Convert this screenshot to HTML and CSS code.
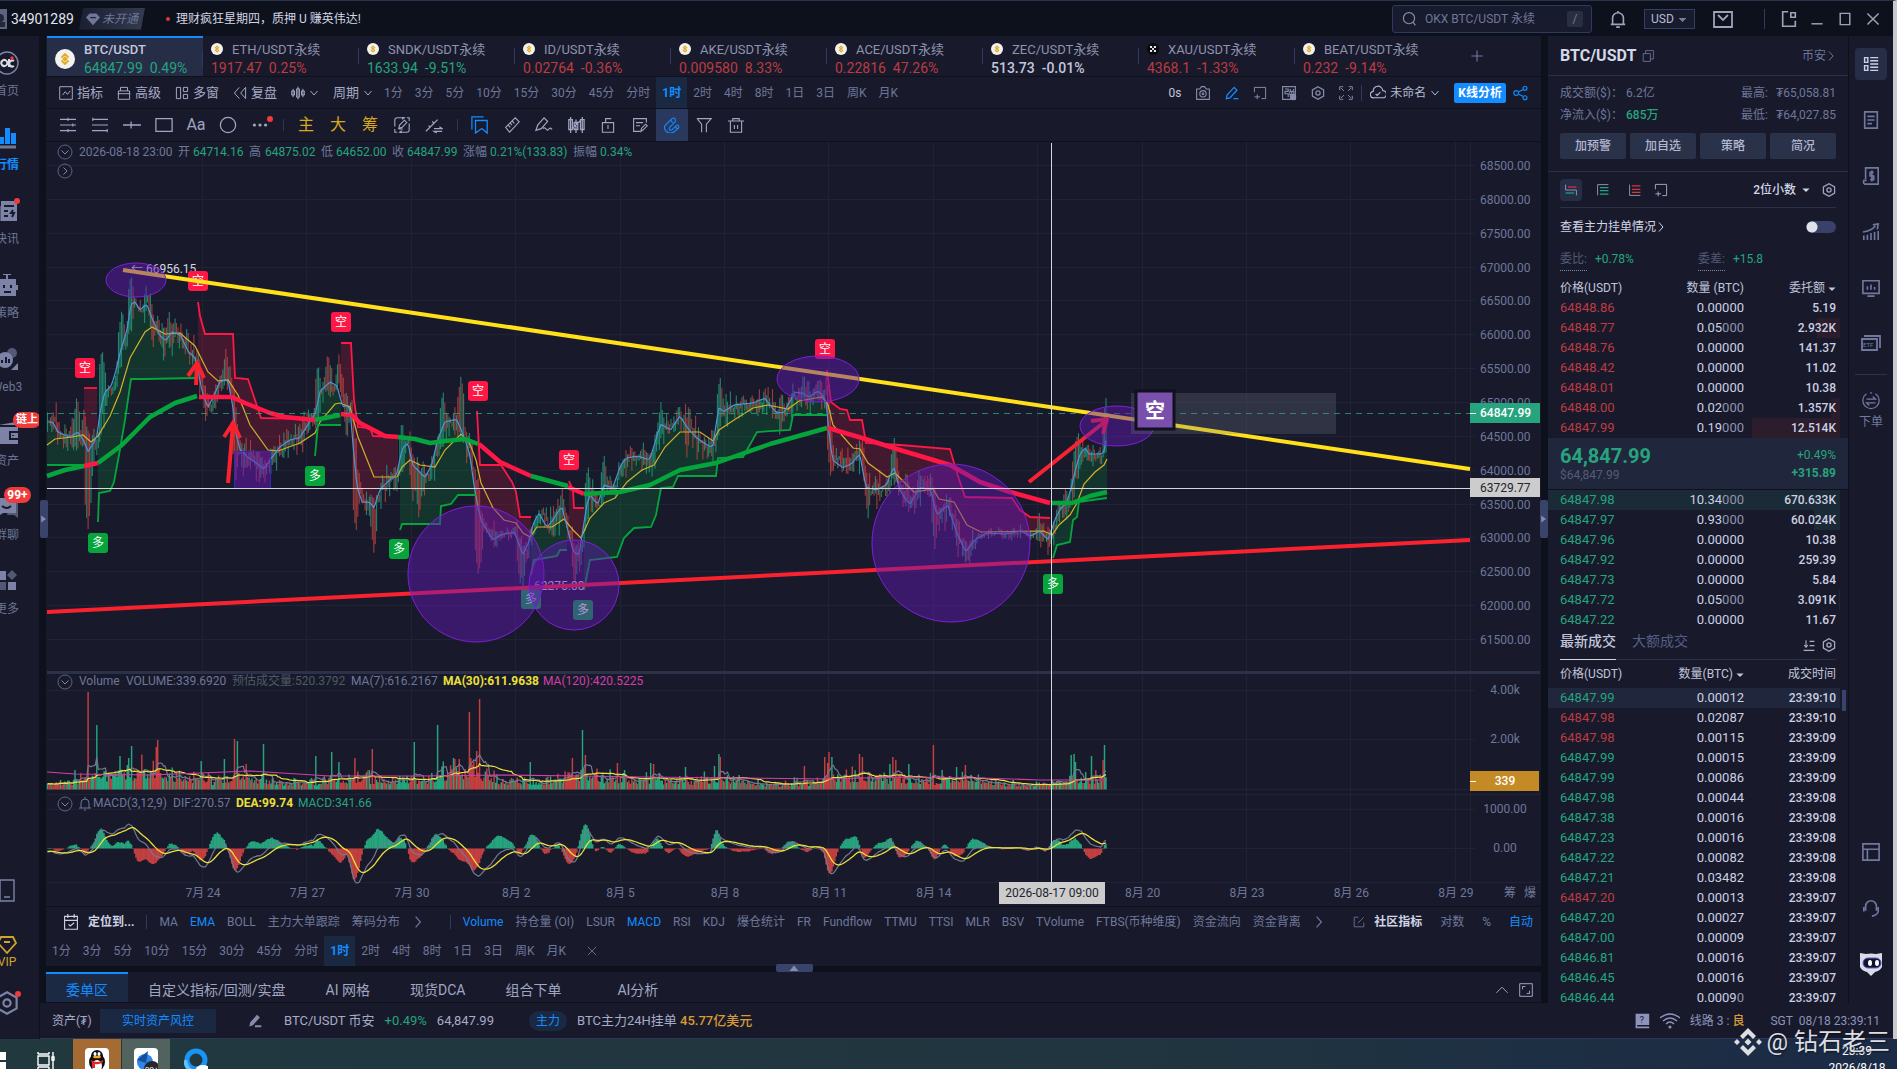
FILE: index.html
```html
<!DOCTYPE html>
<html lang="zh-CN">
<head>
<meta charset="utf-8">
<meta name="viewport" content="width=device-width, initial-scale=1">
<title>BTC/USDT</title>
<link rel="stylesheet" href="styles.css">
</head>
<body>
<svg class="defs" aria-hidden="true">
  <symbol id="hex" viewBox="0 0 20 20"><path d="M10 1l8 4.500v9L10 19l-8-4.500v-9z"/><circle cx="10" cy="10" r="3"/></symbol>
  <symbol id="bell" viewBox="0 0 20 20"><path d="M2 16h16M4 16V9a6 6 0 0112 0v7M8 19h4M10 1v2"/></symbol>
  <symbol id="down" viewBox="0 0 20 20"><path d="M3 6l7 8 7-8" stroke-width="2"/></symbol>
  <symbol id="right" viewBox="0 0 20 20"><path d="M6 1l8 9-8 9" stroke-width="2"/></symbol>
  <symbol id="caret" viewBox="0 0 20 20"><path class="solid" d="M1 6h18l-9 9z"/></symbol>
  <symbol id="pencil" viewBox="0 0 20 20"><path d="M2 18l1-5L13 2l4 4L7 17zM12 18h7"/></symbol>
  <symbol id="addbox" viewBox="0 0 20 20"><path d="M2 9V2h16v16h-6M6 12v7M2 15.500h8"/></symbol>
  <symbol id="coin" viewBox="0 0 20 20"><circle cx="10" cy="10" r="10" fill="#f2f2f0" stroke="none"/><path d="M6.500 8.500L10 5l3.500 3.500M6.500 11.500L10 15l3.500-3.500M10 8.500l1.500 1.500-1.500 1.500L8.500 10zM5 10h.1M15 10h.1" stroke="#e5ab1c" stroke-width="1.800" fill="none"/></symbol>
  <symbol id="okx" viewBox="0 0 20 20"><circle cx="10" cy="10" r="10" fill="#08090d" stroke="none"/><path d="M5 5h3.500v3.500H5zM11.500 5H15v3.500h-3.500zM8.500 8.500h3v3h-3zM5 11.500h3.500V15H5zM11.500 11.500H15V15h-3.500z" fill="#e6e6ea" stroke="none"/></symbol>
  <symbol id="binance" viewBox="0 0 28 28"><path class="solid" d="M14 0l8 8-3 3-5-5-5 5-3-3zM14 28l8-8-3-3-5 5-5-5-3 3zM14 10.500l3.500 3.500-3.500 3.500-3.500-3.500zM3 11l3 3-3 3-3-3zM25 11l3 3-3 3-3-3z"/></symbol>
</svg>

<div class="window">
  <header class="topbar">
    <span class="avatar"><svg class="ic"><circle class="solid" cx="0" cy="9" r="4"/><path class="solid" d="M0 13h5v5H0z"/></svg></span>
    <strong class="uid">34901289</strong>
    <span class="vip-tag"><svg class="ic s14" viewBox="0 0 20 20"><path class="solid" d="M5 2h10l5 6-10 11L0 8z"/><path d="M6 8h8" stroke="#1c2032" stroke-width="2"/></svg>未开通</span>
    <a class="notice" href="#">理财疯狂星期四，质押 U 赚英伟达!</a>
    <div class="top-tools">
      <label class="search"><svg class="ic s16" viewBox="0 0 20 20"><circle cx="10" cy="9" r="7"/><path d="M15 14l3 4"/></svg><input type="text" aria-label="搜索" placeholder="OKX BTC/USDT 永续"><kbd>/</kbd></label>
      <button class="tb" aria-label="提醒"><svg class="ic s18 thick"><use href="#bell"/></svg></button>
      <select class="currency" aria-label="计价货币"><option>USD</option></select>
      <button class="tb mail" aria-label="消息"><svg class="ic s20 thick" viewBox="0 0 20 20"><path d="M1 3h18v15H1zM5 6l5 5 5-5"/></svg></button>
      <i class="vsep"></i>
      <button class="tb" aria-label="弹出"><svg class="ic s18 thick" viewBox="0 0 20 20"><path d="M9 2H3v16h14v-6M12 3h5v5h-5z"/></svg></button>
      <button class="tb" aria-label="最小化"><svg class="ic s16 thick" viewBox="0 0 20 20"><path d="M3 16h14"/></svg></button>
      <button class="tb" aria-label="最大化"><svg class="ic s16 thick" viewBox="0 0 20 20"><path d="M4 3h12v14H4z"/></svg></button>
      <button class="tb" aria-label="关闭"><svg class="ic s16 thick" viewBox="0 0 20 20"><path d="M3 3l14 14M17 3L3 17"/></svg></button>
    </div>
  </header>

  <div class="body">
    <nav class="side">
      <ul>
        <li><a href="#"><svg class="ic s24" viewBox="0 0 24 24"><circle cx="12" cy="12" r="11"/><path class="bright" d="M11 9.500a3 3 0 100 5 3 3 0 000-5zM14 8v7h2M19 10a3 3 0 100 5"/><circle cx="17" cy="7" r="1" fill="#f33" stroke="#f33"/></svg>首页</a></li>
        <li class="on"><a href="#"><svg class="ic s24" viewBox="0 0 24 24"><path class="solid" d="M4 12h5v7H4zM10 3h5v16h-5zM16 8h5v11h-5z"/><path d="M3 22h18" stroke="#6f7799" stroke-width="3"/></svg>行情</a></li>
        <li><a href="#"><svg class="ic s24" viewBox="0 0 24 24"><path class="solid" d="M2 7h4v15H2z" opacity=".6"/><path class="solid" d="M6 2h16v20H6z"/><path class="cut" d="M9 7h10M9 12h4M9 17h4M18 11l-2 3h3l-2 4"/></svg>快讯<i class="dot"></i></a></li>
        <li><a href="#"><svg class="ic s24" viewBox="0 0 24 24"><path class="solid" d="M4 6h17v17H4zM1 12h22v5H1zM11 1h2v5h-2zM8 1h8v1H8z"/><path class="cut" d="M9 12v3M16 12v3M9 19h7"/></svg>策略</a></li>
        <li><a href="#"><svg class="ic s24" viewBox="0 0 24 24"><circle class="solid" cx="17" cy="6" r="5" opacity=".6"/><circle class="solid" cx="10" cy="13" r="8"/><path class="solid" d="M23 16v7h-7z"/><path class="cut" d="M7 13v3M11 10v6M14 12v4"/></svg>Web3</a></li>
        <li><a href="#"><svg class="ic s24" viewBox="0 0 24 24"><path class="solid" d="M2 6h21v17H2zM3 4l18-3v3z"/><path class="cut" d="M23 11h-8v7h8M18 14v1"/></svg>资产<b class="badge new">链上</b></a></li>
        <li><a href="#"><svg class="ic s24" viewBox="0 0 24 24"><path class="solid" d="M16 8h7v15l-4-3h-7z" opacity=".6"/><path class="solid" d="M2 3h19v15H8l-6 4z"/><path class="cut" d="M7 11q5 4 9 0"/></svg>群聊<b class="badge count">99+</b></a></li>
        <li><a href="#"><svg class="ic s24" viewBox="0 0 24 24"><path class="solid" d="M2 2h9v9H2zM13 13h8v8h-8z"/><path class="solid" d="M17 1l5 5-5 5-5-5zM2 13h9v8H2z" opacity=".6"/></svg>更多</a></li>
      </ul>
      <ul class="side-foot">
        <li><a href="#" aria-label="手机"><svg class="ic s24" viewBox="0 0 24 24"><path d="M5 1h14v21H5zM9 18h6"/></svg></a></li>
        <li class="gold"><a href="#"><svg class="ic s20 thick" viewBox="0 0 20 20"><path d="M4 2h12l3 6-9 10L1 8zM7 7h6"/></svg>VIP</a></li>
        <li><a href="#" aria-label="设置"><svg class="ic s24 thick"><use href="#hex"/></svg><i class="dot"></i></a></li>
      </ul>
    </nav>

    <div class="stage">
      <div class="work">
        <main class="market">
          <nav class="tabs" id="tabs"><button class="plus" aria-label="添加"><svg class="ic s16" viewBox="0 0 20 20"><path d="M10 3v14M3 10h14"/></svg></button></nav>

          <div class="tools">
            <button><svg class="ic s14" viewBox="0 0 20 20"><path d="M1 1h18v18H1zM5 13l4-5 3 4 4-5"/></svg>指标</button>
            <button><svg class="ic s14" viewBox="0 0 20 20"><path d="M2 7h16v12H2zM5 7V2h10v5M1 11h18"/></svg>高级</button>
            <button><svg class="ic s14" viewBox="0 0 20 20"><path d="M2 2h6v16H2zM12 2h6v6h-6zM12 12h6v6h-6z"/></svg>多窗</button>
            <button><svg class="ic s14" viewBox="0 0 20 20"><path d="M9 2L2 10l7 8M18 2v16l-7-8z"/></svg>复盘</button>
            <button aria-label="K线样式"><svg class="ic s14" viewBox="0 0 20 20"><path d="M1 7h4v6H1zM8 4h4v12H8zM15 7h4v6h-4zM3 4v12M10 1v18M17 4v12"/></svg><svg class="ic s10"><use href="#down"/></svg></button>
            <button>周期<svg class="ic s10"><use href="#down"/></svg></button>
            <div class="periods"></div>
            <div class="tools-right">
              <span class="light">0s</span>
              <button aria-label="截图"><svg class="ic s16" viewBox="0 0 20 20"><path d="M2 5h4l2-3h4l2 3h4v13H2z"/><circle cx="10" cy="11" r="4"/><circle cx="10" cy="11" r="1"/></svg></button>
              <button class="blue" aria-label="画线"><svg class="ic s14 thick"><use href="#pencil"/></svg></button>
              <button aria-label="添加窗口"><svg class="ic s14"><use href="#addbox"/></svg></button>
              <button aria-label="弹幕"><svg class="ic s16" viewBox="0 0 20 20"><path d="M2 2h16v16H2zM5 5h4v3H5v3h4v4M11 5l1 2M16 5l-1 2M11 8h5v4h-5zM13.500 8v8"/><circle class="solid" cx="15" cy="15" r="4"/></svg></button>
              <button aria-label="设置"><svg class="ic s14 thick"><use href="#hex"/></svg></button>
              <button aria-label="全屏"><svg class="ic s14" viewBox="0 0 20 20"><path d="M1 6V1h5M14 1h5v5M19 14v5h-5M6 19H1v-5M3 3l4 4M17 3l-4 4M17 17l-4-4M3 17l4-4"/></svg></button>
              <i class="vsep"></i>
              <button class="name"><svg class="ic s16" viewBox="0 0 20 20"><path d="M5 16a4 4 0 01-1-8 6 6 0 0112-1 4.500 4.500 0 010 9zM7 11l2 2 4-4"/></svg>未命名<svg class="ic s10"><use href="#down"/></svg></button>
              <button class="analyse">K线分析</button>
              <button class="blue share" aria-label="分享"><svg class="ic s16" viewBox="0 0 20 20"><circle cx="4" cy="10" r="3"/><circle cx="15" cy="4" r="2.500"/><circle cx="15" cy="16" r="2.500"/><path d="M7 8.500l6-3M7 11.500l6 3"/></svg></button>
            </div>
          </div>

          <div class="draw">
            <button aria-label="平行线"><svg class="ic s16" viewBox="0 0 20 20"><path d="M0 3h20M0 10h20M0 17h20M10 1v4M16 8v4M10 15v4"/></svg></button>
            <button aria-label="斐波那契"><svg class="ic s16" viewBox="0 0 20 20"><path d="M1 3h19M0 10h20M0 17h19M1 1v4M19 15v4"/></svg></button>
            <button aria-label="水平线"><svg class="ic s18" viewBox="0 0 20 20"><path d="M0 10h20M9 6v8"/></svg></button>
            <button aria-label="矩形"><svg class="ic s18" viewBox="0 0 20 20"><path d="M1 3h18v14H1z"/></svg></button>
            <button class="aa">Aa</button>
            <button aria-label="圆"><svg class="ic s18" viewBox="0 0 20 20"><circle cx="10" cy="10" r="8.500"/></svg></button>
            <button class="more" aria-label="更多"><svg class="ic s16" viewBox="0 0 20 20"><circle class="solid" cx="3" cy="10" r="2"/><circle class="solid" cx="10" cy="10" r="2"/><circle class="solid" cx="17" cy="10" r="2"/></svg><i class="dot"></i></button>
            <i class="dsep"></i>
            <button class="gold">主</button>
            <button class="gold">大</button>
            <button class="gold">筹</button>
            <button aria-label="连续画线"><svg class="ic s16" viewBox="0 0 20 20"><path d="M1 12V4q0-3 3-3h9M10 0l3 1-3 2M19 8v8q0 3-3 3H7M10 17l-3 2 3 1M1 15v4h3M19 5V1h-3M6 14l1-4 6-6 3 3-6 6zM6 15h5"/></svg></button>
            <button aria-label="趋势切换"><svg class="ic s18" viewBox="0 0 20 20"><path d="M1 17L14 4M6 12l-2-1M10 8L8 6M10 14h9l-3-2M19 17h-9l3 2"/></svg></button>
            <i class="dsep"></i>
            <button class="blue" aria-label="收藏"><svg class="ic s18" viewBox="0 0 20 20"><path d="M1 15V1h13M5 5h13v14l-6-5-7 5z"/></svg></button>
            <button aria-label="测量"><svg class="ic s16" viewBox="0 0 20 20"><path d="M2 13L14 1l5 5L7 19zM5 10l3 3M10 5l3 3M8 8l2 2"/></svg></button>
            <button aria-label="画笔"><svg class="ic s18" viewBox="0 0 20 20"><path d="M1 16l2-6 7-8 4 4-7 8zM9 14c3-3 4 4 6 1s3-1 4 0"/></svg></button>
            <button aria-label="K线形态"><svg class="ic s18" viewBox="0 0 20 20"><path d="M2 4h4v11H2zM8 7h4v8H8zM15 4h4v11h-4zM4 1v18M10 4v15M17 1v18M6 14l9-9"/></svg></button>
            <button aria-label="锁定"><svg class="ic s16" viewBox="0 0 20 20"><path d="M3 7h14v12H3zM7 7V2h7M10 10v5"/></svg></button>
            <button aria-label="笔记"><svg class="ic s16" viewBox="0 0 20 20"><path d="M18 7V2H2v16h8M5 7h9M5 11h5M11 18l1-4 5-5 2 2-5 5z"/></svg></button>
            <button class="magnet" aria-label="磁吸"><svg class="ic s16" viewBox="0 0 20 20"><path d="M2 10l8-8q3-2 4 1t-1 4l-6 6q-1 2 0 3t3 0l5-5q2-2 3 0t0 3l-6 5q-6 3-10-2-3-4 0-7zM8 4l3 3M14 12l3 3"/></svg></button>
            <button aria-label="筛选"><svg class="ic s16" viewBox="0 0 20 20"><path d="M1 2h18l-6 7v10M7 19V9L2 3"/></svg></button>
            <button aria-label="删除"><svg class="ic s16" viewBox="0 0 20 20"><path d="M0 5h20M6 5V2h8v3M3 5v14h14V5M8 10v5M12 10v5"/></svg></button>
          </div>

          <section class="chart"><svg id="chart" viewBox="46 142 1495 764" role="img" aria-label="BTC/USDT 1时 K线"></svg></section>

          <div class="indicators">
            <button class="goto"><svg class="ic s16" viewBox="0 0 20 20"><path d="M2 3h16v16H2zM2 8h16M6 0v5M14 0v5M7 13l2 2 5-4"/></svg>定位到...</button>
            <i class="vsep"></i>
            <button>MA</button><button class="blue">EMA</button><button>BOLL</button><button>主力大单跟踪</button><button>筹码分布</button>
            <button aria-label="更多主图指标"><svg class="ic s12"><use href="#right"/></svg></button>
            <i class="vsep wide"></i>
            <button class="blue">Volume</button><button>持仓量 (OI)</button><button>LSUR</button><button class="blue">MACD</button><button>RSI</button><button>KDJ</button><button>爆仓统计</button><button>FR</button><button>Fundflow</button><button>TTMU</button><button>TTSI</button><button>MLR</button><button>BSV</button><button>TVolume</button><button>FTBS(币种维度)</button><button>资金流向</button><button>资金背离</button>
            <button aria-label="更多副图指标"><svg class="ic s12"><use href="#right"/></svg></button>
            <div class="scale">
              <button class="goto community"><svg class="ic s12" viewBox="0 0 20 20"><path d="M9 2H2v16h16v-7M8 12L18 2"/></svg>社区指标</button>
              <button>对数</button><button>%</button><button class="blue">自动</button>
            </div>
          </div>
          <div class="period-row"><div class="periods"></div><button aria-label="关闭周期栏"><svg class="ic s12" viewBox="0 0 20 20"><path d="M3 3l14 14M17 3L3 17"/></svg></button></div>

          <nav class="orders">
            <button class="handle-top" aria-label="展开"><svg class="ic s10" viewBox="0 0 20 20"><path class="solid" d="M1 16h18L10 5z"/></svg></button>
            <button class="on">委单区</button><button>自定义指标/回测/实盘</button><button>AI 网格</button><button>现货DCA</button><button>组合下单</button><button class="ai">AI分析</button>
            <span class="orders-right"><svg class="ic s14" viewBox="0 0 20 20"><path d="M2 14l8-8 8 8"/></svg><svg class="ic s14" viewBox="0 0 20 20"><path d="M1 1h18v18H1zM5 9V5h4M15 11v4h-4"/></svg></span>
          </nav>
          <button class="handle left" aria-label="收起侧栏"><svg class="ic s8" viewBox="0 0 20 20"><path class="solid" d="M3 1v18l12-9z"/></svg></button>
          <button class="handle right" aria-label="收起盘口"><svg class="ic s8" viewBox="0 0 20 20"><path class="solid" d="M3 1v18l12-9z"/></svg></button>
        </main>

        <aside class="book">
          <div class="book-head"><h1>BTC/USDT</h1><svg class="ic s12" viewBox="0 0 20 20"><path d="M2 6h12v13H2zM6 6V1h13v14h-5"/></svg><a href="#">币安<svg class="ic s10"><use href="#right"/></svg></a></div>
          <div class="summary">
            <dl>
              <div><dt>成交额($)：</dt><dd>6.2亿</dd></div><div class="end"><dt>最高:</dt><dd>₮65,058.81</dd></div>
              <div><dt>净流入($)：</dt><dd class="up strong">685万</dd></div><div class="end"><dt>最低:</dt><dd>₮64,027.85</dd></div>
            </dl>
            <div class="actions"><button>加预警</button><button>加自选</button><button>策略</button><button>简况</button></div>
          </div>
          <div class="book-tools">
            <button class="on" aria-label="买卖盘"><svg class="ic s12" viewBox="0 0 20 20"><path d="M1 1v9h18v9"/><path d="M5 5h14" stroke="#d6353d" stroke-width="2"/><path d="M1 15h14" stroke="#1fa77e" stroke-width="2"/></svg></button>
            <button aria-label="买盘"><svg class="ic s12" viewBox="0 0 20 20"><path d="M1 19V1h18"/><path d="M5 6h14M5 11h14M5 17h14" stroke="#1fa77e" stroke-width="2"/></svg></button>
            <button aria-label="卖盘"><svg class="ic s12" viewBox="0 0 20 20"><path d="M1 1v18h18"/><path d="M5 3h14M5 9h14M5 14h14" stroke="#d6353d" stroke-width="2"/></svg></button>
            <button class="add" aria-label="新窗口"><svg class="ic s14"><use href="#addbox"/></svg></button>
            <button class="digits">2位小数<svg class="ic s8"><use href="#caret"/></svg></button>
            <button class="cog" aria-label="盘口设置"><svg class="ic s14 thick"><use href="#hex"/></svg></button>
          </div>
          <div class="whale"><label for="whale">查看主力挂单情况<svg class="ic s10"><use href="#right"/></svg></label><input type="checkbox" id="whale"></div>
          <div class="ratio"><span><em>委比:</em> <b>+0.78%</b></span><span><em>委差:</em> <b>+15.8</b></span></div>
          <table class="quote"><thead><tr><th>价格(USDT)</th><th>数量 (BTC)</th><th>委托额 <svg class="ic s8"><use href="#caret"/></svg></th></tr></thead><tbody id="asks" class="asks"></tbody></table>
          <div class="last"><div><strong>64,847.99</strong><small>$64,847.99</small></div><div class="chg"><span>+0.49%</span><b>+315.89</b></div></div>
          <table class="quote"><tbody id="bids" class="bids"></tbody></table>
          <div class="trade-tabs"><button class="on">最新成交</button><button>大额成交</button><span><svg class="ic s12 thick" viewBox="0 0 20 20"><path d="M5 2v11M2 10l3 4 3-4M11 4h8M11 11h8M1 19h18"/></svg><svg class="ic s14 thick"><use href="#hex"/></svg></span></div>
          <div class="trades"><table class="quote"><thead><tr><th>价格(USDT)</th><th>数量(BTC) <svg class="ic s8"><use href="#caret"/></svg></th><th>成交时间</th></tr></thead><tbody id="trades"></tbody></table></div>
        </aside>

        <nav class="rail">
          <button class="on" aria-label="盘口"><svg class="ic s16 thick" viewBox="0 0 20 20"><path d="M2 2h4v6H2zM2 12h4v6H2zM9 2h10M9 6h10M9 10h10M9 14h10M9 18h10"/></svg></button>
          <button aria-label="公告"><svg class="ic s18 thick" viewBox="0 0 20 20"><path d="M3 1h14v18H3zM6 6h8M6 10h8M6 14h5"/></svg></button>
          <button aria-label="账单"><svg class="ic s18 thick" viewBox="0 0 20 20"><path d="M4 14V1h14v18H3q-2-1-1-4h3M13 6H9v4h4v4H9M11 4v12"/></svg></button>
          <button aria-label="走势"><svg class="ic s18 thick" viewBox="0 0 20 20"><path d="M2 19v-5M6 19v-6M10 19v-8M14 19v-9M18 19V9M1 10q9-1 14-7M12 2l6-1-1 6"/></svg></button>
          <button aria-label="监控"><svg class="ic s18 thick" viewBox="0 0 20 20"><path d="M1 2h18v14H1zM6 8v4M10 6v6M14 9v3M6 19h8"/></svg></button>
          <button aria-label="ETF"><svg class="ic s20 thick" viewBox="0 0 20 20"><path d="M1 5h15v11H1zM3 2h16v12"/><text x="2" y="13" font-size="6">ETF</text></svg></button>
          <hr>
          <button class="place"><svg class="ic s18" viewBox="0 0 20 20"><path d="M5 2a9 9 0 1010 0M5 8h10l-3-3M15 12H5l3 3M9 1h2"/></svg>下单</button>
          <div class="rail-foot">
            <button aria-label="布局"><svg class="ic s18 thick" viewBox="0 0 20 20"><path d="M1 1h18v18H1zM1 7h18M6 7v12"/></svg></button>
            <button aria-label="客服"><svg class="ic s18 thick" viewBox="0 0 20 20"><path d="M4 13V8a6 6 0 0112 0v5M2 9v5M18 9v5q-1 4-7 5"/></svg></button>
            <button aria-label="AI助手"><svg class="ic s24" viewBox="0 0 24 24"><path d="M1 1l6 1q5-1 10 0l6-1v14q-2 4-7 5l-4 4-4-4q-5-1-7-5z" fill="#d9dce6" stroke="none"/><rect x="4" y="6" width="18" height="10" rx="5" fill="#10142a" stroke="#5a5ad0" stroke-width="1"/><ellipse cx="11" cy="11" rx="2" ry="3" fill="#fff" stroke="none"/><ellipse cx="18" cy="11" rx="2" ry="3" fill="#fff" stroke="none"/></svg></button>
          </div>
        </nav>
      </div>

      <footer class="status">
        <span>资产(₮)</span>
        <button class="risk">实时资产风控</button>
        <svg class="ic s14" viewBox="0 0 20 20"><path class="solid" d="M2 18l1-6L13 1l4 4L7 16zM10 16h9v3h-9z"/></svg>
        <span class="ticker">BTC/USDT 币安</span><span class="up">+0.49%</span><span>64,847.99</span>
        <span class="pill">主力</span><span>BTC主力24H挂单 <b>45.77亿美元</b></span>
        <div class="net"><svg class="ic s16" viewBox="0 0 20 20"><path class="solid" d="M2 1h17v14H4v2h15v2H2z"/><text class="cut-text" x="7" y="12" font-size="12">?</text></svg><svg class="ic s20" viewBox="0 0 20 20"><path d="M0 7q10-8 20 0M3 10q7-6 14 0M6 13q4-4 8 0"/><circle class="solid" cx="10" cy="16" r="1.500"/></svg><span>线路 3 : <b>良</b></span><time>SGT&nbsp; 08/18 23:39:11</time></div>
      </footer>
    </div>
  </div>
</div>

<footer class="taskbar">
  <svg class="start" viewBox="0 0 7 18"><path class="solid" d="M0 0l6-1v9H0zM0 10h6v9l-6-1z"/></svg>
  <svg class="ic s18 view" viewBox="0 0 18 18"><path d="M1 4h11v9H1zM1 0v2M12 0v2M1 2h11M1 15h11M1 15v3M12 15v3M16 0v18"/><path d="M15 5h2v3h-2z"/></svg>
  <span class="app qq"><svg viewBox="0 0 24 24"><rect width="24" height="24" rx="4" fill="#fff"/><ellipse cx="12" cy="14" rx="8" ry="9" fill="#101010"/><ellipse cx="12" cy="8" rx="6" ry="6" fill="#101010"/><ellipse cx="12" cy="18" rx="5" ry="6" fill="#fff"/><ellipse cx="10" cy="6" rx="1.500" ry="2" fill="#fff"/><ellipse cx="14" cy="6" rx="1.500" ry="2" fill="#fff"/><ellipse cx="12" cy="9" rx="4" ry="1.300" fill="#f5a623"/><path d="M6 12q6 4 12 0v2q-4 3-8 2v4H7v-5z" fill="#e3242b"/></svg></span>
  <span class="app chat"><svg viewBox="0 0 24 24"><rect width="24" height="24" rx="4" fill="#fff"/><circle cx="11" cy="14" r="8" fill="#2f86e8"/><path d="M3 12l11-9-2 12z" fill="#124f9e"/><circle cx="18" cy="21" r="8" fill="#24262c"/><text x="11" y="24" font-size="8" fill="#fff">99+</text></svg></span>
  <svg class="browser" viewBox="0 0 24 24"><circle cx="12" cy="12" r="9" fill="none" stroke="#1994f5" stroke-width="5"/><path d="M1 12q2 12 11 12" fill="none" stroke="#61c2f8" stroke-width="4"/><ellipse cx="19" cy="21" rx="7" ry="4" fill="#fff"/></svg>
  <div class="clock"><time>23:39</time><time>2026/8/18</time></div>
</footer>
<div class="mark"><svg class="ic" viewBox="0 0 28 28"><use href="#binance"/></svg>@ 钻石老三</div>
<script src="app.js"></script>
</body>
</html>
```
FILE: styles.css
```css
:root {
  --panel: #181a2c; --deep: #0d111c; --line: #2a3149; --muted: #6f7799; --soft: #9ca1bd; --text: #c3c7dc;
  --blue: #138cff; --up: #25a47d; --down: #bd3b40; --tint: #1a2842; --gold: #d3a42c;
}
* { box-sizing: border-box; }
body { margin: 0; height: 100vh; display: flex; flex-direction: column; overflow: hidden; position: relative; background: var(--deep); color: var(--soft); font: 12px/16px Roboto, "Noto Sans CJK SC", sans-serif; }
button, select, input { font: inherit; color: inherit; background: none; border: 0; padding: 0; margin: 0; }
button { display: inline-flex; align-items: center; justify-content: center; gap: 4px; white-space: nowrap; }
a { color: inherit; text-decoration: none; }
ul, dl, dd, h1 { margin: 0; padding: 0; list-style: none; }
.defs { display: none; }
.ic { fill: none; stroke: currentColor; stroke-width: 1.4; flex: none; vertical-align: middle; }
.thick { stroke-width: 1.8; }
.solid { fill: currentColor; stroke: none; }
.cut { stroke: var(--panel); stroke-width: 2; }
.ic text { fill: currentColor; stroke: none; }
.ic .cut-text { fill: var(--panel); }
.s8 { width: 8px; height: 8px; } .s10 { width: 10px; height: 10px; } .s12 { width: 12px; height: 12px; } .s14 { width: 14px; height: 14px; }
.s16 { width: 16px; height: 16px; } .s18 { width: 18px; height: 18px; } .s20 { width: 20px; height: 20px; } .s24 { width: 24px; height: 24px; }
.blue { color: var(--blue); }
.gold { color: var(--gold); }
.up { color: var(--up); }
.strong { font-weight: 500; }
.light { color: var(--text); }
.dot { width: 6px; height: 6px; border-radius: 50%; background: #f03b3b; }
.vsep { width: 1px; height: 16px; background: #303a60; flex: none; }

.window { flex: 1; min-height: 0; display: flex; flex-direction: column; border-right: 4px solid #c8cad0; border-top: 1px solid #28324a; }
.topbar { height: 35px; flex: none; display: flex; align-items: center; }
.avatar { width: 7px; height: 20px; background: #5d6481; overflow: hidden; color: #23273b; }
.avatar .ic { width: 7px; height: 20px; }
.uid { font-size: 14px; font-weight: 400; color: #e2e4ee; margin: 0 4px; width: 64px; }
.vip-tag { width: 66px; height: 22px; display: flex; align-items: center; justify-content: center; gap: 2px; font-style: italic; color: var(--muted); background: linear-gradient(90deg, #1a1f31, #343a50); clip-path: polygon(4px 0, 100% 0, 62px 100%, 0 100%); }
.notice { margin-left: 21px; color: #d3d6e4; display: flex; align-items: center; gap: 6px; }
.notice::before { content: ""; width: 4px; height: 4px; border-radius: 50%; background: #e8343c; }
.top-tools { margin-left: auto; display: flex; align-items: center; padding-right: 6px; color: #9ea3ba; }
.tb { width: 28px; height: 28px; }
.search { width: 200px; height: 28px; display: flex; align-items: center; gap: 8px; padding: 0 8px; border: 1px solid #303760; border-radius: 3px; background: #181b2d; margin-right: 12px; color: #888da8; }
.search input { flex: 1; min-width: 0; outline: 0; font-size: 12px; }
.search input::placeholder { color: var(--muted); opacity: 1; }
kbd { width: 16px; height: 16px; line-height: 16px; text-align: center; background: #2a2f40; border-radius: 2px; font: inherit; color: var(--muted); }
.currency { width: 51px; height: 20px; margin: 0 14px 0 12px; padding: 0 6px; border: 1px solid #353c66; color: #b9bccd; appearance: none; background: linear-gradient(135deg, #777c95 50%, transparent 50%) no-repeat 38px 8px / 4px 4px, linear-gradient(225deg, #777c95 50%, transparent 50%) no-repeat 34px 8px / 4px 4px, #181b2d; }
.mail { margin-right: 27px; }
.top-tools > .vsep { margin-right: 10px; height: 20px; }

.body { flex: 1; min-height: 0; display: flex; }
.side { width: 39px; flex: none; overflow: hidden; background: var(--panel); display: flex; flex-direction: column; justify-content: space-between; margin-right: 1px; }
.side ul { width: 48px; margin-left: -17px; color: #7d84a3; }
.side li { height: 74px; }
.side a { position: relative; display: flex; flex-direction: column; align-items: center; padding-top: 15px; gap: 9px; line-height: 14px; color: #6e7594; }
.side .ic { color: #7c83a6; }
.side .bright { stroke: #d9dbe7; stroke-width: 2; }
.side .on a, .side .on .ic { color: var(--blue); font-weight: 700; }
.side .gold a, .side .gold .ic { color: var(--gold); }
.side .dot { position: absolute; top: 14px; left: 31px; }
.badge { position: absolute; color: #fff; background: #f03b3b; border-radius: 9px; line-height: 16px; text-align: center; }
.badge.new { top: 6px; left: 30px; width: 28px; font-size: 11px; }
.badge.count { top: 7px; left: 21px; width: 27px; font-size: 12px; }
.side-foot li { height: 56px; }
.side-foot li:last-child { height: 48px; }
.side ul.side-foot a { padding-top: 0; gap: 0; }
.side-foot .dot { top: 0; left: 32px; }

.stage { flex: 1; min-width: 0; display: flex; flex-direction: column; }
.work { flex: 1; min-height: 0; display: flex; }
.market { flex: 1; min-width: 0; margin: 0 7px 0 6px; display: flex; flex-direction: column; position: relative; }
.tabs, .tools, .draw, .indicators, .period-row, .orders { background: var(--panel); display: flex; align-items: center; flex: none; }
.tabs { height: 41px; border-bottom: 1px solid var(--deep); align-items: stretch; padding-left: 1px; }
.tab { flex: 0 1 156px; min-width: 0; position: relative; display: grid; grid-template-columns: 12px 1fr; column-gap: 9px; align-content: center; padding: 5px 0 0 8px; text-align: left; line-height: 19px; justify-content: start; row-gap: 0; }
.tab::after { content: ""; position: absolute; right: 0; top: 12px; width: 1px; height: 16px; background: #303a60; }
.tab:nth-last-child(2)::after { display: none; }
.tab svg { width: 12px; height: 12px; align-self: center; }
.tab .sym { font-size: 13px; color: #8e93ae; }
.tab .px { grid-column: 1 / 3; font-size: 14px; color: var(--down); white-space: pre; }
.tab .px.up { color: var(--up); }
.tab .px.flat { color: var(--text); font-weight: 500; }
.tab.on { background: #262e47; border-top: 2px solid var(--blue); padding-top: 3px; grid-template-columns: 20px 1fr; }
.tab.on svg { width: 20px; height: 20px; grid-row: 1 / 3; }
.tab.on .sym { color: var(--text); font-weight: 500; }
.tab.on .px { grid-column: 2; }
.plus { width: 52px; color: var(--muted); }
.tools { height: 32px; border-bottom: 1px solid var(--deep); padding: 0 12px 0 13px; font-size: 13px; gap: 14px; color: #a5a9c2; }
.periods { display: flex; align-self: stretch; color: var(--muted); font-size: 12px; }
.tools .periods { margin-left: -9px; }
.periods button { padding: 0 6px; }
.periods .on { background: var(--tint); color: var(--blue); font-weight: 700; }
.tools-right { margin-left: auto; display: flex; align-items: center; gap: 14px; font-size: 12px; color: #858ba9; }
.tools-right .vsep { margin: 0 -6px; }
.tools-right .share { margin-left: -7px; }
.name { color: #b5b9cf; }
.analyse { background: var(--blue); color: #fff; font-weight: 700; height: 20px; padding: 0 4px; border-radius: 2px; }
.draw { height: 33px; border-bottom: 1px solid var(--deep); padding-left: 6px; color: #a0a5c0; }
.draw button { width: 32px; height: 32px; position: relative; font-size: 16px; }
.draw .gold { color: #d9a820; }
.draw .blue { color: var(--blue); }
.draw .dot { position: absolute; right: 3px; top: 7px; }
.dsep { width: 14px; height: 12px; background: linear-gradient(#303650, #303650) center / 1px 100% no-repeat; }
.draw .magnet { background: #2b385e; color: var(--blue); }
.chart { flex: 1; min-height: 0; background: var(--panel); overflow: hidden; }
.chart svg { display: block; width: 100%; height: 100%; }
.chart text { font-size: 12px; fill: var(--muted); }
.indicators { height: 30px; border-top: 1px solid var(--deep); padding: 0 8px 0 17px; gap: 12px; color: var(--muted); overflow: hidden; }
.goto { color: #d0d3e4; font-weight: 700; gap: 9px; }
.vsep.wide { margin: 0 0 0 14px; }
.indicators > .vsep { height: 14px; }
.scale { margin-left: auto; display: flex; gap: 18px; }
.community .ic { color: var(--muted); }
.period-row { height: 30px; gap: 14px; color: var(--muted); }
.orders { height: 31px; margin-top: 6px; border-bottom: 1px solid var(--deep); align-items: stretch; position: relative; font-size: 14px; color: #a1a6c0; }
.orders > button { padding: 6px 20px 0; }
.orders > .on { background: #1c2943; color: var(--blue); border-top: 2px solid var(--blue); padding-top: 4px; }
.orders > .ai { margin-left: 16px; }
.orders-right { margin-left: auto; display: flex; align-items: center; gap: 10px; padding: 6px 8px 0 0; }
.orders > .handle-top { position: absolute; left: 50%; top: -8px; width: 37px; height: 8px; margin-left: -18px; padding: 0; background: #3a436c; border-radius: 2px; color: #878da6; }
.handle { position: absolute; top: 48%; width: 8px; height: 38px; background: #3a436c; color: #878da6; border-radius: 2px; }
.handle.left { left: -6px; } .handle.right { right: -7px; }

.book { width: 301px; flex: none; background: var(--panel); border-right: 1px solid var(--deep); display: flex; flex-direction: column; overflow: hidden; }
.book > * { flex: none; }
.book-head { height: 40px; border-bottom: 1px solid var(--line); display: flex; align-items: center; gap: 6px; padding: 1px 12px 0; color: var(--muted); }
.book-head h1 { font-size: 16px; line-height: 20px; color: #d5d8e6; }
.book-head a { margin-left: auto; display: flex; align-items: center; }
.summary { padding: 6px 12px 12px; border-bottom: 1px solid var(--line); color: var(--muted); }
.summary dl { display: grid; grid-template-columns: 1fr 1fr; line-height: 22px; }
.summary dl > div { display: flex; gap: 3px; }
.summary dl > .end { justify-content: flex-end; gap: 8px; }
.actions { display: grid; grid-template-columns: repeat(4, 1fr); gap: 4px; margin-top: 7px; }
.actions button { height: 26px; background: #2a324a; border-radius: 2px; color: #b4b8d0; font-weight: 500; }
.book-tools { height: 36px; margin: 0 12px; border-bottom: 1px solid var(--line); display: flex; align-items: center; gap: 10px; color: #a0a5c0; }
.book-tools button { width: 22px; height: 22px; }
.book-tools .on { background: #262e47; border-radius: 4px; }
.book-tools .add { margin-left: -6px; }
.book-tools .digits { width: auto; margin-left: auto; color: #d2d5e5; font-weight: 500; gap: 6px; }
.book-tools .cog { width: 14px; margin-left: 2px; }
.whale { height: 37px; padding: 0 12px; display: flex; justify-content: space-between; align-items: center; color: #d2d5e5; }
.whale input { appearance: none; width: 30px; height: 12px; border-radius: 6px; background: radial-gradient(circle at 6px 6px, #dfe2ea 5px, transparent 6px), #394069; }
.ratio { height: 28px; padding: 0 12px; display: flex; align-items: center; color: #545a78; }
.ratio span { width: 138px; }
.ratio em { font-style: normal; border-bottom: 1px dotted #8288a6; padding-bottom: 4px; margin-right: 5px; }
.ratio b { color: var(--up); font-weight: 400; }
.quote { width: 292px; table-layout: fixed; border-collapse: collapse; font-size: 13px; color: #cdd0e2; }
.quote tr { height: 20px; }
.quote th, .quote td { padding: 0 4px; text-align: right; line-height: 20px; font-weight: 400; white-space: nowrap; }
.quote th { font-size: 12px; line-height: 20px; padding-top: 5px; color: #c1c5da; }
.trades .quote th { line-height: 28px; padding-top: 0; }
.quote th:nth-child(1), .quote td:nth-child(1) { text-align: left; padding-left: 12px; width: 100px; }
.quote th:nth-child(2), .quote td:nth-child(2) { width: 100px; }
.quote td:nth-child(3) { font-size: 12px; font-weight: 500; }
.quote td i { font-style: normal; color: #8f94b0; }
.quote .asks td:first-child, .quote .sell td:first-child { color: var(--down); }
.quote .bids td:first-child, .quote .buy td:first-child { color: var(--up); }
.asks tr { background: linear-gradient(to left, #2b1d2c var(--d), transparent var(--d)); }
.bids tr { background: linear-gradient(to left, #1a2a36 var(--d), transparent var(--d)); }
.book > .last { height: 52px; background: #20263b; padding: 0 12px; display: flex; justify-content: space-between; align-items: center; color: var(--up); border-bottom: 1px solid var(--deep); }
.last strong { display: block; font-size: 20px; line-height: 22px; font-weight: 700; }
.last small { font-size: 12px; color: #555c78; line-height: 16px; display: block; }
.chg { display: grid; text-align: right; line-height: 18px; }
.trade-tabs { height: 30px; margin: 0 12px; border-bottom: 1px solid var(--line); display: flex; align-items: stretch; gap: 16px; font-size: 14px; color: #545f85; }
.trade-tabs .on { color: var(--text); font-weight: 500; border-bottom: 1px solid #d0d3e2; margin-bottom: -1px; }
.trade-tabs button { align-items: flex-start; padding-top: 3px; }
.trade-tabs span { margin-left: auto; display: flex; gap: 7px; align-items: center; color: #a9adc4; }
.book > .trades { flex: 1; min-height: 0; overflow: hidden; position: relative; }
.trades::after { content: ""; position: absolute; right: 2px; top: 30px; width: 4px; height: 21px; background: #3a436c; }
.trades tbody tr:first-child { background: #20263b; }

.rail { width: 44px; flex: none; background: var(--panel); display: flex; flex-direction: column; align-items: center; padding-top: 12px; gap: 24px; color: #7178a0; }
.rail button { width: 32px; height: 32px; }
.rail .on { background: #262e47; border-radius: 4px; color: #ced1e2; }
.rail hr { width: 32px; border: 0; border-top: 1px solid var(--line); margin: -10px 0; }
.rail .place { flex-direction: column; height: 44px; }
.rail-foot { margin-top: auto; display: grid; gap: 24px; padding-bottom: 23px; }

.status { height: 36px; flex: none; background: var(--panel); border-bottom: 1px solid #2d3854; display: flex; align-items: center; padding: 0 13px 0 12px; gap: 10px; font-size: 13px; color: #a7abc5; }
.status > span:first-child { font-size: 12px; width: 38px; white-space: nowrap; }
.risk { width: 116px; height: 24px; background: var(--tint); color: var(--blue); font-size: 12px; }
.status > .ic { margin-left: 22px; color: #868ca8; }
.ticker { margin-left: 12px; }
.pill { background: var(--tint); color: var(--blue); border-radius: 10px; line-height: 20px; padding: 0 7px; margin-left: 25px; font-size: 12px; }
.status b { color: #d99a35; font-weight: 500; }
.net { margin-left: auto; display: flex; align-items: center; gap: 10px; font-size: 12px; color: #8d93ba; }
.net time { margin-left: 16px; }
.taskbar { height: 30px; flex: none; display: flex; background: linear-gradient(90deg, #22383f, #20353f 60%, #1b2a46); color: #fff; overflow: hidden; }
.start { width: 7px; height: 18px; margin-top: 13px; color: #fff; }
.view { margin: 13px 18px 0 30px; width: 18px; }
.app { width: 48px; height: 30px; padding: 9px 12px 0; margin-right: 1px; }
.app svg, .browser { width: 24px; height: 24px; display: block; }
.qq { background: #a66a33; } .chat { background: #52625f; }
.browser { margin: 9px 0 0 13px; }
.clock { margin-left: auto; width: 80px; display: grid; text-align: center; align-content: start; padding-top: 4px; line-height: 17px; }
.clock time { font-size: 12px; }
.mark { position: absolute; right: 7px; bottom: 12px; display: flex; align-items: center; gap: 4px; font-size: 24px; line-height: 30px; color: #dcdee4; text-shadow: 1px 1px 2px #0008; }
.mark .ic { width: 28px; height: 28px; }
```
FILE: app.js
```js
const $ = (s) => document.querySelector(s);

/* ---- symbol tabs and periods ---- */
const tabs = [
  ['BTC/USDT', '64847.99  0.49%', 'up', 'coin'], ['ETH/USDT永续', '1917.47  0.25%', '', 'coin'],
  ['SNDK/USDT永续', '1633.94  -9.51%', 'up', 'coin'], ['ID/USDT永续', '0.02764  -0.36%', '', 'coin'],
  ['AKE/USDT永续', '0.009580  8.33%', '', 'coin'], ['ACE/USDT永续', '0.22816  47.26%', '', 'coin'],
  ['ZEC/USDT永续', '513.73  -0.01%', 'flat', 'coin'], ['XAU/USDT永续', '4368.1  -1.33%', '', 'okx'],
  ['BEAT/USDT永续', '0.232  -9.14%', '', 'coin']];
$('#tabs').insertAdjacentHTML('afterbegin', tabs.map(([n, p, c, i], k) =>
  `<button class="tab${k ? '' : ' on'}"><svg><use href="#${i}"/></svg><span class="sym">${n}</span><span class="px ${c}">${p}</span></button>`).join(''));
const periods = '1分 3分 5分 10分 15分 30分 45分 分时 1时 2时 4时 8时 1日 3日 周K 月K'.split(' ');
document.querySelectorAll('.periods').forEach((el) => {
  el.innerHTML = periods.map((p) => `<button${p === '1时' ? ' class="on"' : ''}>${p}</button>`).join('');
});

/* ---- order book and trades ---- */
const qty = (q) => q.replace(/^(\d+\.\d\d)(000)$/, (m, a, b) => (a === '0.00' ? m : `${a}<i>${b}</i>`));
const depth = (rows) => rows.map(([p, q, v, d]) => `<tr style="--d:${d}%"><td>${p}</td><td>${qty(q)}</td><td>${v}</td></tr>`).join('');
$('#asks').innerHTML = depth([
  ['64848.86', '0.00000', '5.19', 0], ['64848.77', '0.05000', '2.932K', 8], ['64848.76', '0.00000', '141.37', 0],
  ['64848.42', '0.00000', '11.02', 0], ['64848.01', '0.00000', '10.38', 0], ['64848.00', '0.02000', '1.357K', 3],
  ['64847.99', '0.19000', '12.514K', 30]]);
$('#bids').innerHTML = depth([
  ['64847.98', '10.34000', '670.633K', 100], ['64847.97', '0.93000', '60.024K', 9], ['64847.96', '0.00000', '10.38', 0],
  ['64847.92', '0.00000', '259.39', 0], ['64847.73', '0.00000', '5.84', 0], ['64847.72', '0.05000', '3.091K', 0.4],
  ['64847.22', '0.00000', '11.67', 0]]);
$('#trades').innerHTML = [
  ['buy', '64847.99', '0.00012', '10'], ['sell', '64847.98', '0.02087', '10'], ['sell', '64847.98', '0.00115', '09'],
  ['buy', '64847.99', '0.00015', '09'], ['buy', '64847.99', '0.00086', '09'], ['buy', '64847.98', '0.00044', '08'],
  ['buy', '64847.38', '0.00016', '08'], ['buy', '64847.23', '0.00016', '08'], ['buy', '64847.22', '0.00082', '08'],
  ['buy', '64847.21', '0.03482', '08'], ['sell', '64847.20', '0.00013', '07'], ['buy', '64847.20', '0.00027', '07'],
  ['buy', '64847.00', '0.00009', '07'], ['buy', '64846.81', '0.00016', '07'], ['buy', '64846.45', '0.00016', '07'],
  ['buy', '64846.44', '0.0009<i>0</i>', '07']]
  .map(([s, p, q, t]) => `<tr class="${s}"><td>${p}</td><td>${q}</td><td>23:39:${t}</td></tr>`).join('');

/* ---- chart ---- */
const pairs = (s) => s.trim().split(/\s+/).map((p) => p.split(',').map(Number));
const at = (pts, x) => {
  if (x <= pts[0][0]) return pts[0][1];
  for (let i = 1; i < pts.length; i++) {
    if (x <= pts[i][0]) {
      const [x0, y0] = pts[i - 1], [x1, y1] = pts[i];
      return y0 + (y1 - y0) * (x - x0) / (x1 - x0 || 1);
    }
  }
  return pts[pts.length - 1][1];
};
const price = pairs(`47,422 53,422 58,432 70,437 78,432 84,440 88,452 92,446 97,438 100,413 105,392 111,387 116,372 121,350 127,332 131,305 135,301 140,310 147,304 153,320 160,335 166,341 172,332 181,335 188,351 196,358 202,390 208,408 214,396 220,382 228,379 233,405 236,432 240,449 249,458 258,464 264,469 272,458 280,447 290,440 300,438 308,425 316,413 320,392 330,382 337,385 343,407 350,405 353,440 357,485 362,502 370,502 374,509 380,490 390,480 397,475 402,450 408,442 413,465 420,472 425,478 432,465 438,440 445,422 457,419 464,436 470,453 475,490 481,520 493,540 501,535 515,532 523,555 529,543 533,525 539,513 547,527 552,522 562,506 567,525 573,550 579,557 584,525 587,505 590,494 598,505 604,485 613,488 621,465 627,458 638,456 650,460 661,424 671,430 680,416 688,428 696,437 703,442 713,448 719,407 724,412 734,405 753,403 765,398 776,412 784,413 795,392 803,393 809,397 818,391 826,398 830,440 833,460 843,468 853,463 860,453 866,487 876,490 887,485 894,466 900,490 910,505 920,487 931,490 937,515 948,505 956,530 966,552 975,540 987,533 1006,534 1021,531 1031,536 1040,531 1048,540 1052,530 1055,520 1061,508 1066,505 1071,490 1079,457 1085,447 1089,454 1104,454 1107,435`);
const ema = pairs(`47,445 55,439 72,437 83,435 91,442 98,436 110,416 120,392 130,358 145,332 152,327 165,334 180,333 195,346 208,372 218,381 228,380 238,395 250,425 268,450 278,451 300,443 315,433 320,422 335,404 340,403 350,407 358,437 374,477 397,477 402,467 410,460 420,465 435,467 445,450 461,434 470,444 476,460 481,483 493,508 504,520 516,523 523,533 530,537 537,527 552,527 564,519 573,530 581,538 590,518 604,503 615,498 627,482 642,470 654,465 665,447 680,432 700,432 713,441 719,430 734,420 753,408 768,405 788,409 799,401 822,397 828,405 833,425 853,448 860,449 868,463 887,477 895,473 914,492 933,489 939,499 954,502 967,525 981,532 1044,531 1052,535 1059,525 1070,515 1077,503 1084,484 1095,472 1104,465 1107,459`);
const G = '#06a53c', R = '#ff1745';
const stops = [
  [G, '47,465 84,465'], [R, '84,388 97,388'],
  [G, '98,522 99,493 110,491 114,482 119,455 125,420 131,379 145,379 196,378'],
  [R, '198,302 200,316 205,334 233,334 235,378 248,379 255,400 261,418 315,419'],
  [G, '315,456 318,425 341,425'], [R, '341,343 351,343 354,400 358,427 370,428 373,436 398,437'],
  [G, '400,530 402,524 440,524 441,506 451,504 458,495 476,495'],
  [R, '477,411 480,465 501,465 512,482 516,492 520,517 531,517'],
  [G, '531,575 534,560 557,556 560,550 567,550'], [R, '569,481 573,490 574,508 584,508'],
  [G, '584,590 590,560 617,557 624,538 634,528 651,527 656,515 661,488 673,487 678,476 716,476 718,458 743,457 757,432 790,430 793,415 827,415'],
  [R, '827,370 831,402 840,409 847,410 850,420 862,420 866,443 900,445 950,449 956,470 965,497 1012,498 1020,510 1030,517 1050,518'],
  [G, '1053,558 1057,545 1070,542 1073,520 1077,517 1079,502 1092,500 1107,498']];
const trend = [
  [G, '47,476 65,470 84,466'], [R, '84,466 98,463'], [G, '98,463 122,445 150,417 175,403 197,396'],
  [R, '199,397 232,397 245,403 270,413 285,417 315,420'], [G, '315,420 340,415'], [R, '341,414 352,415 360,423 385,436 398,437'],
  [G, '398,437 415,439 430,443 445,441 465,439 478,444'], [R, '479,444 500,462 531,476'], [G, '531,476 568,486'],
  [R, '568,487 584,494'], [G, '584,494 620,492 650,485 680,470 716,463 770,444 795,437 827,428'],
  [R, '828,428 862,438 900,450 950,465 980,482 1010,492 1050,503'], [G, '1052,503 1072,503 1090,496 1107,492']];

let seed = 20260818;
const rnd = () => { seed = (seed * 1664525 + 1013904223) % 4294967296; return seed / 4294967296; };
const STEP = 1.45, N = 731, X = (i) => 47.5 + i * STEP;
const highs = pairs('77,395 84,408 102,348 122,308 131,273 146,285 169,310 181,323 197,348 226,348 308,406 318,363 328,352 339,354 402,420 443,390 461,375 494,520 562,487 588,465 604,454 631,442 661,401 679,402 689,403 720,376 760,393 793,382 804,374 808,376 818,377 860,437 894,436 919,470 931,470 1039,511 1060,500 1066,485 1076,438 1078,430 1106,398');
const lows = pairs('58,448 76,455 88,530 92,480 153,350 164,365 172,358 206,425 236,480 243,478 263,482 310,428 347,442 356,533 374,555 413,502 419,520 424,500 478,575 480,572 520,585 523,590 575,590 580,575 652,478 687,458 727,432 776,420 831,480 853,478 868,520 909,514 935,550 958,558 966,568 1048,555 1050,552 1058,515 1084,460 1098,465');
const up = [], dn = [], closes = [], greens = [];
let prev = price[0][1];
for (let i = 0; i < N; i++) {
  const x = X(i), calm = x > 975 && x < 1035 ? 0.35 : x > 480 && x < 515 ? 0.5 : 1;
  const c = at(price, x - 1) + (rnd() - 0.5) * 13 * calm;
  let top = Math.min(prev, c) - rnd() * rnd() * 20 * calm, bot = Math.max(prev, c) + rnd() * rnd() * 20 * calm;
  highs.forEach(([hx, hy]) => { const k = Math.abs(hx - x); if (k < 3.6) top = Math.min(top, hy + k * 7); });
  lows.forEach(([lx, ly]) => { const k = Math.abs(lx - x); if (k < 3.6) bot = Math.max(bot, ly - k * 9); });
  greens.push(c < prev);
  (c < prev ? up : dn).push(`M${x.toFixed(1)} ${top.toFixed(1)}V${bot.toFixed(1)}`);
  closes.push(at(price, x + 3) * 0.8 + c * 0.2);
  prev = c;
}
const line = (pts, color, w, extra = '') => `<polyline points="${pts.map((p) => p[0].toFixed(1) + ',' + p[1].toFixed(1)).join(' ')}" fill="none" stroke="${color}" stroke-width="${w}" ${extra}/>`;
const hl = (y, x1 = 47, x2 = 1475, c = '#202336') => `<path d="M${x1} ${y}.5H${x2}" stroke="${c}"/>`;
const vl = (x) => `<path d="M${x.toFixed(0)}.5 142V882" stroke="#202336"/>`;
const txt = (x, y, s, a = '') => `<text x="${x}" y="${y}" ${a}>${s}</text>`;
let o = '';

for (let k = 0; k < 15; k++) {
  const y = Math.round(165 + 33.85 * k);
  o += hl(y) + txt(1480, y + 5, (68500 - 500 * k) + '.00');
}
for (let k = 0; k < 13; k++) o += vl(202 + 104.4 * k);
o += vl(1470);
[690, 739, 789, 809, 848].forEach((y) => { o += hl(y); });
o += hl(794, 47, 1540) + hl(882, 47, 1540);

stops.forEach(([c, s]) => {
  const p = pairs(s), a = p[0][0], b = p[p.length - 1][0], edge = [];
  for (let x = b; x >= a; x -= 2) edge.push([x, at(price, x)]);
  edge.push([a, at(price, a)]);
  o += `<polygon points="${p.concat(edge).map((q) => q.join(',')).join(' ')}" fill="${c}" opacity=".19"/>`;
});
o += `<path d="${up.join('')}" stroke="#259778" stroke-width="1.1" opacity=".85"/><path d="${dn.join('')}" stroke="#c04540" stroke-width="1.1" opacity=".8"/>`;
o += line(ema, '#d3b02a', 1.2) + line(closes.map((y, i) => [X(i), at(price, X(i)) * 0.85 + y * 0.15]), '#4f93d8', 1.2);
stops.forEach(([c, s]) => { o += line(pairs(s), c, 1.8); });
trend.forEach(([c, s]) => { o += line(pairs(s), c, 4.5, 'stroke-linejoin="round"'); });
o += '<path d="M47 413.500H1470" stroke="#25a47d" stroke-dasharray="6 5" opacity=".8"/>';
o += txt(131, 273, '← 66956.15', 'style="fill:#d4d6e2"');
o += txt(534, 590, '62275.08', 'style="fill:#d4d6e2"');

const flag = (x, y, t, c) => `<rect x="${x - 10}" y="${y - 10}" width="20" height="20" rx="3" fill="${c}"/>` + txt(x, y + 4, t, 'text-anchor="middle" style="fill:#fff"');
[[85, 368], [198, 281], [341, 322], [478, 391], [569, 460], [825, 349]].forEach(([x, y]) => { o += flag(x, y, '空', R); });
[[98, 543], [315, 476], [399, 549], [531, 599], [583, 610], [1053, 584]].forEach(([x, y]) => { o += flag(x, y, '多', '#06a53c'); });
o += '<path d="M123 270L1470 469" stroke="#ffe01a" stroke-width="4"/><path d="M47 612L1470 540" stroke="#fb2230" stroke-width="4"/>';
o += '<g stroke="#fb2230" stroke-width="4" fill="none"><path d="M196 385L197 364M188 376L197 363L204 378"/><path d="M228 483L233 424M224 437L233 423L240 438"/><path d="M1029 482L1107 420M1091 421L1107 419L1103 434"/></g>';
o += '<rect x="234" y="451" width="37" height="37" fill="#6a18b8" opacity=".5"/><path d="M234.500 488V451.500H270.500V488" fill="none" stroke="#2b2fae"/>';
[[136, 280, 30, 17], [476, 574, 68, 68], [574, 585, 45, 45], [818, 379, 41, 23], [951, 543, 79, 79], [1117, 426, 37, 20]].forEach(([x, y, a, b]) => {
  o += `<ellipse cx="${x}" cy="${y}" rx="${a}" ry="${b}" fill="#6317b5" fill-opacity=".46" stroke="#7e1fd6"/>`;
});
o += '<rect x="1131" y="393" width="205" height="41" fill="#747a8c" fill-opacity=".26"/><rect x="1136" y="391" width="38" height="38" fill="#784fab" stroke="#11101d" stroke-width="3"/>';
o += txt(1155, 418, '空', 'text-anchor="middle" style="fill:#fff;font-size:20px;font-weight:700"');

/* volume */
const spikes = pairs('88,692,0 97,725,1 131,746,1 156,747,0 158,740,0 120,756,1 234,739,0 237,741,1 263,744,1 224,759,1 201,761,1 316,756,1 332,752,1 355,758,0 373,749,0 339,762,1 415,742,1 437,725,1 469,712,0 479,699,0 460,759,0 477,751,0 531,762,1 573,758,0 583,730,1 585,755,0 617,763,0 651,763,1 654,764,0 719,754,1 721,757,0 715,766,1 686,767,1 804,766,0 825,757,0 829,752,0 832,757,1 828,763,0 860,754,0 863,757,0 893,757,0 896,760,0 890,764,1 909,764,1 934,745,0 957,767,1 965,764,0 966,765,0 1071,755,1 1074,754,1 1076,762,1 1092,756,1 1103,760,0 1105,745,1');
const env = pairs('47,9 70,13 88,22 110,26 140,30 170,24 190,20 215,14 240,26 260,16 285,9 320,12 350,20 380,16 420,16 445,26 480,28 500,14 540,10 583,26 600,20 640,16 700,14 730,16 770,8 810,10 835,24 870,20 900,18 940,14 965,20 1000,10 1040,6 1060,14 1090,18 1107,20');
const vols = [], vg = [], vr = [];
for (let i = 0; i < N; i++) {
  const x = X(i);
  let h = at(env, x) * (0.3 + rnd() * rnd() * 0.9) + rnd() * rnd() * 5, g = greens[i];
  spikes.forEach(([sx, sy, c]) => { if (Math.abs(sx - x) < 0.73) { h = 789.5 - sy; g = c; } });
  vols.push(h);
  (g ? vg : vr).push(`M${x.toFixed(1)} ${(789.5 - h).toFixed(1)}V789.500`);
}
const avg = (a, n) => a.map((_, i) => { const s = a.slice(Math.max(0, i - n + 1), i + 1); return s.reduce((p, q) => p + q, 0) / s.length; });
o += `<path d="${vg.join('')}" stroke="#25a47d" stroke-width="1.450"/><path d="${vr.join('')}" stroke="#c43f40" stroke-width="1.450"/>`;
const ma = (n, c) => line(avg(vols, n).map((v, i) => [X(i), 789.5 - v]), c, 1.2);
o += ma(7, '#737990') + ma(30, '#ece038');
o += line(pairs('47,772 75,774 150,775 250,771 330,776 420,776 500,775 583,776 640,777 740,778 830,779 900,777 980,778 1040,780 1107,780'), '#d23fa6', 1.2);

/* MACD */
let f = closes[0], s = closes[0] - 4, dea = -3;
const dif = [], sig = [], mg = [], mr = [];
closes.forEach((c, i) => {
  f += (c - f) * 0.5; s += (c - s) * 2 / 13;
  const d = (s - f) * 0.95; dea += (d - dea) * 0.15;
  const m = (d - dea) * 1.7, x = X(i);
  dif.push([x, 848.5 - d]); sig.push([x, 848.5 - dea]);
  (m > 0 ? mg : mr).push(`M${x.toFixed(1)} 848.500v${(-m).toFixed(1)}`);
});
o += `<path d="${mg.join('')}" stroke="#25a47d" stroke-width="1.450"/><path d="${mr.join('')}" stroke="#c43f40" stroke-width="1.450"/>`;
o += line(dif, '#737990', 1.2) + line(sig, '#ece038', 1.3);

o += '<rect x="47" y="671" width="1493" height="3" fill="#2a3149"/>';
o += '<path d="M1051.500 143V882M47 488.500H1470" stroke="#d6d7da"/>';
o += '<rect x="1470" y="403" width="70" height="20" fill="#25a47d"/><path d="M1470 413.500h6" stroke="#fff"/>' + txt(1480, 417, '64847.99', 'style="fill:#fff;font-weight:500"');
o += '<rect x="1470" y="478" width="70" height="19" fill="#ccc"/>' + txt(1480, 492, '63729.77', 'style="fill:#22242f"');
o += '<rect x="1470" y="771" width="69" height="20" fill="#c48a26"/><path d="M1470 781.500h6" stroke="#fff"/>' + txt(1505, 785, '339', 'text-anchor="middle" style="fill:#fff;font-weight:500"');
[[694, '4.00k'], [743, '2.00k'], [813, '1000.00'], [852, '0.00']].forEach(([y, t]) => { o += txt(1505, y, t, 'text-anchor="middle"'); });
['7月 24', '7月 27', '7月 30', '8月 2', '8月 5', '8月 8', '8月 11', '8月 14', '', '8月 20', '8月 23', '8月 26', '8月 29'].forEach((t, k) => {
  o += txt(203 + 104.4 * k, 897, t, 'text-anchor="middle"');
});
o += '<rect x="999" y="882" width="106" height="22" fill="#ccc"/>' + txt(1052, 897, '2026-08-17 09:00', 'text-anchor="middle" style="fill:#22242f"');
o += txt(1504, 897, '筹') + txt(1524, 897, '爆');

const ring = (y, d) => `<circle cx="65" cy="${y}" r="7" fill="none" stroke="#5c6281"/><path d="${d}" fill="none" stroke="#8187a5"/>`;
o += ring(152, 'M61.500 150.500l3.500 3.500 3.500-3.500') + ring(171, 'M63.500 167.500l3.500 3.500-3.500 3.500') + ring(682, 'M61.500 680.500l3.500 3.500 3.500-3.500') + ring(804, 'M61.500 802.500l3.500 3.500 3.500-3.500');
const legend = (y, items) => items.map(([x, t, c = '#6f7799', w = 400]) => txt(x, y, t, `style="fill:${c};font-weight:${w}"`)).join('');
const g = '#25a47d';
o += legend(156, [[79, '2026-08-18 23:00'], [178, '开'], [193, '64714.16', g], [249, '高'], [265, '64875.02', g], [321, '低'], [336, '64652.00', g], [392, '收'], [407, '64847.99', g], [463, '涨幅'], [490, '0.21%(133.83)', g], [573, '振幅'], [600, '0.34%', g]]);
o += legend(685, [[79, 'Volume'], [126, 'VOLUME:339.6920'], [232, '预估成交量:520.3792', '#4d5a63'], [351, 'MA(7):616.2167'], [443, 'MA(30):611.9638', '#ece038', 700], [543, 'MA(120):420.5225', '#d23fa6']]);
o += '<path d="M79 808h12M81 808v-5a4 4 0 018 0v5M84 810h2M85 797v2" fill="none" stroke="#6f7799"/>';
o += legend(807, [[93, 'MACD(3,12,9)'], [173, 'DIF:270.57'], [236, 'DEA:99.74', '#ece038', 700], [298, 'MACD:341.66', g]]);
$('#chart').innerHTML = o;
```
